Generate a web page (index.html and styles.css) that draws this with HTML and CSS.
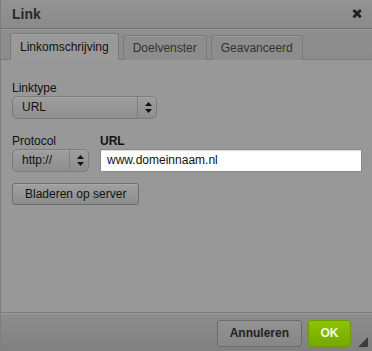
FILE: index.html
```html
<!DOCTYPE html>
<html lang="nl">
  <head>
    <meta charset="UTF-8" />
    <title>Link</title>
    <link rel="stylesheet" href="styles.css">
  </head>
  <body>
    <div class="dialog">
      <div class="titlebar">
        <span class="title">Link</span>
        <span class="close">&#x2715;</span>
      </div>

      <div class="tabs">
        <div class="tab active">Linkomschrijving</div>
        <div class="tab">Doelvenster</div>
        <div class="tab">Geavanceerd</div>
      </div>

      <div class="content">
        <div class="field">
          <label>Linktype</label>
          <div class="select wide">
            <span class="value">URL</span>
            <span class="arrows">
              <svg width="7" height="11" viewBox="0 0 7 11"><path d="M3.5 0L7 4H0z M3.5 11L7 7H0z" fill="#111"/></svg>
            </span>
          </div>
        </div>

        <div class="row">
          <div class="field">
            <label>Protocol</label>
            <div class="select narrow">
              <span class="value">http://</span>
              <span class="arrows">
                <svg width="7" height="11" viewBox="0 0 7 11"><path d="M3.5 0L7 4H0z M3.5 11L7 7H0z" fill="#111"/></svg>
              </span>
            </div>
          </div>
          <div class="field grow">
            <label class="bold">URL</label>
            <div class="input">www.domeinnaam.nl</div>
          </div>
        </div>

        <div class="browse">Bladeren op server</div>
      </div>

      <div class="footer">
        <div class="btn">Annuleren</div>
        <div class="btn ok">OK</div>
        <span class="resize"></span>
      </div>
    </div>
  </body>
</html>
```

FILE: styles.css
```css
body {
  margin: 0;
  font-family: "Liberation Sans", Arial, sans-serif;
  font-size: 12px;
  color: #111;
  background: #979797;
}
.dialog {
  position: relative;
  display: flex;
  flex-direction: column;
  width: 372px;
  height: 351px;
  box-sizing: border-box;
  border-left: 1px solid #7e7e7e;
  background: #989898;
}
.titlebar {
  display: flex;
  justify-content: space-between;
  align-items: center;
  height: 28px;
  padding: 0 10px 0 11px;
  background: linear-gradient(#939393, #8a8a8a);
  border-bottom: 1px solid #727272;
}
.title {
  font-size: 14px;
  font-weight: bold;
  color: #2a2a2a;
}
.close {
  font-size: 12px;
  font-weight: bold;
  color: #222;
  -webkit-text-stroke: 1px #222;
}
.tabs {
  display: flex;
  gap: 4px;
  padding: 5px 0 0 9px;
  box-sizing: border-box;
  height: 31px;
  background: linear-gradient(#8f8f8f, #8c8c8c);
  border-top: 1px solid #9c9c9c;
  border-bottom: 1px solid #7c7c7c;
  align-items: flex-end;
}
.tab {
  height: 24px;
  line-height: 24px;
  padding: 0 9px;
  font-size: 12px;
  color: #333;
  background: #8d8d8d;
  border: 1px solid #7a7a7a;
  border-bottom: none;
  border-radius: 3px 3px 0 0;
  margin-bottom: -1px;
  box-shadow: inset 0 1px 0 #999;
}
.tab.active {
  height: 26px;
  line-height: 26px;
  padding: 0 9px;
  color: #111;
  background: #999;
  box-shadow: inset 0 1px 0 #a4a4a4;
}
.content {
  flex: 1;
  padding: 22px 11px 0 11px;
}
.field {
  display: flex;
  flex-direction: column;
}
.field label {
  height: 13px;
  line-height: 13px;
  margin-bottom: 1px;
}
.field label.bold {
  font-weight: bold;
  font-size: 12px;
}
.select {
  display: flex;
  height: 23px;
  box-sizing: border-box;
  border: 1px solid #7c7c7c;
  border-radius: 5px;
  background: linear-gradient(#9e9e9e, #8e8e8e);
  box-shadow: inset 0 1px 0 #a6a6a6;
  align-items: stretch;
}
.select .value {
  flex: 1;
  padding-left: 9px;
  line-height: 21px;
  font-size: 12px;
}
.select .arrows {
  display: flex;
  align-items: center;
  justify-content: center;
  width: 16px;
  border-left: 1px solid #7f7f7f;
  padding-left: 2px;
}
.select.wide {
  width: 145px;
}
.select.narrow {
  width: 77px;
}
.row {
  display: flex;
  gap: 11px;
  margin-top: 16px;
}
.grow {
  flex: 1;
}
.input {
  height: 23px;
  box-sizing: border-box;
  width: 262px;
  background: #fff;
  border: 1px solid #8a8a8a;
  line-height: 21px;
  padding-left: 6px;
  font-size: 12px;
  color: #111;
  box-shadow: inset 0 1px 1px rgba(0, 0, 0, 0.15);
}
.browse {
  display: inline-block;
  margin-top: 11px;
  height: 22px;
  line-height: 20px;
  box-sizing: border-box;
  padding: 0 12px;
  border: 1px solid #6e6e6e;
  border-radius: 3px;
  background: linear-gradient(#a0a0a0, #8c8c8c);
  box-shadow: inset 0 1px 0 #a8a8a8;
  font-size: 12px;
}
.footer {
  display: flex;
  justify-content: flex-end;
  align-items: center;
  gap: 6px;
  height: 39px;
  padding-right: 21px;
  box-sizing: border-box;
  border-top: 1px solid #7a7a7a;
  background: linear-gradient(#8e8e8e, #808080);
  box-shadow: inset 0 1px 0 #9a9a9a;
}
.btn {
  height: 27px;
  line-height: 25px;
  box-sizing: border-box;
  padding: 0 12px;
  border: 1px solid #6c6c6c;
  border-radius: 3px;
  background: linear-gradient(#939393, #868686);
  font-weight: bold;
  font-size: 12px;
  color: #222;
  margin-top: 3px;
}
.btn.ok {
  width: 43px;
  padding: 0;
  text-align: center;
  color: #f4f8ea;
  border-color: #6e9a00;
  background: linear-gradient(#8cc400, #74a800);
}
.resize {
  position: absolute;
  right: 4px;
  bottom: 4px;
  width: 0;
  height: 0;
  border-left: 10px solid transparent;
  border-bottom: 10px solid #3c3c3c;
}
```
